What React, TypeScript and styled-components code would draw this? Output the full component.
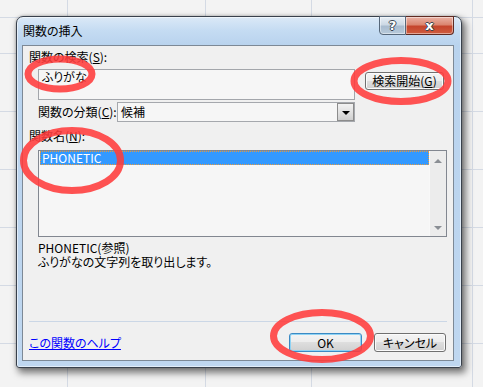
import React from "react";
import styled, { createGlobalStyle } from "styled-components";

const vLines = [67, 205, 311, 472];
const hLines = [17, 53, 111, 169, 227, 285, 343];
const lineColor = "#d4dae4";

const gridImages = [
  ...vLines.map(() => `linear-gradient(${lineColor}, ${lineColor})`),
  ...hLines.map(() => `linear-gradient(${lineColor}, ${lineColor})`),
].join(", ");
const gridSizes = [
  ...vLines.map(() => "1px 100%"),
  ...hLines.map(() => "100% 1px"),
].join(", ");
const gridPositions = [
  ...vLines.map((x) => `${x}px 0`),
  ...hLines.map((y) => `0 ${y}px`),
].join(", ");

const GlobalStyle = createGlobalStyle`
  html, body { margin: 0; padding: 0; }
  body {
    width: 483px;
    height: 387px;
    overflow: hidden;
    background: #f3f3f3;
    font-family: "Noto Sans CJK JP", "Noto Sans", sans-serif;
    font-size: 12px;
    font-feature-settings: "palt";
    color: #000;
  }
`;

const Page = styled.div`
  position: relative;
  width: 483px;
  height: 387px;
  box-sizing: border-box;
  padding: 16px 0 0 16px;
  background-color: #f3f3f3;
  background-image: ${gridImages};
  background-size: ${gridSizes};
  background-position: ${gridPositions};
  background-repeat: no-repeat;
`;

const Dialog = styled.div`
  width: 446px;
  height: 352px;
  box-sizing: border-box;
  border: 1px solid #39414c;
  border-radius: 7px 7px 3px 3px;
  background: linear-gradient(180deg, #dbe9f7 0px, #c4dbf2 14px, #b9d3ee 28px, #bfd7f0 100%);
  box-shadow: 3px 4px 7px 1px rgba(0, 0, 0, 0.5), 0 0 3px rgba(0, 0, 0, 0.25),
    inset 0 0 0 1px rgba(255, 255, 255, 0.55);
  display: flex;
  flex-direction: column;
  padding: 0 7px 6px 5px;
`;

const TitleBar = styled.div`
  height: 28px;
  flex: none;
  display: flex;
  align-items: flex-start;
`;

const TitleText = styled.div`
  margin: 7px 0 0 1px;
  font-size: 12px;
  line-height: 14px;
  color: #000;
`;

const TitleButtons = styled.div`
  margin-left: auto;
  margin-top: -1px;
  display: flex;
  height: 19px;
`;

const CaptionButton = styled.div<{ $close?: boolean }>`
  box-sizing: border-box;
  height: 19px;
  width: ${(p) => (p.$close ? "48px" : "27px")};
  display: flex;
  align-items: center;
  justify-content: center;
  border: 1px solid ${(p) => (p.$close ? "#5e2a22" : "#56677a")};
  border-left-width: ${(p) => (p.$close ? "0" : "1px")};
  border-radius: ${(p) => (p.$close ? "0 0 4px 0" : "0 0 0 4px")};
  background: ${(p) =>
    p.$close
      ? "linear-gradient(180deg, #eab2a5 0%, #db8670 45%, #c5452c 55%, #cf5d40 100%)"
      : "linear-gradient(180deg, #e8eff6 0%, #cdd9e5 45%, #a9bccf 55%, #b8cadb 100%)"};
  box-shadow: inset 0 0 0 1px rgba(255, 255, 255, 0.45);
  color: #fff;
  font-family: "DejaVu Sans", sans-serif;
  font-weight: bold;
  font-size: 13px;
  line-height: 1;
  text-shadow: 1px 0 0 #3b4450, -1px 0 0 #3b4450, 0 1px 0 #3b4450, 0 -1px 0 #3b4450;
`;

const Client = styled.div`
  flex: 1;
  box-sizing: border-box;
  border: 1px solid #7d8996;
  background: #f0f0f0;
  padding: 4px 6px 8px 6px;
  display: flex;
  flex-direction: column;
`;

const Label = styled.div`
  height: 14px;
  line-height: 14px;
  white-space: nowrap;
`;

const SearchRow = styled.div`
  margin-top: 5px;
  padding-left: 9px;
  display: flex;
  align-items: flex-start;
  gap: 10px;
`;

const SearchBox = styled.div`
  box-sizing: border-box;
  width: 317px;
  height: 31px;
  border: 1px solid #a3a6ab;
  background: #f6f6f6;
  padding: 0 3px;
  line-height: 14px;
`;

const Button = styled.div<{ $w: number; $h: number; $default?: boolean }>`
  box-sizing: border-box;
  width: ${(p) => p.$w}px;
  height: ${(p) => p.$h}px;
  border: 1px solid ${(p) => (p.$default ? "#3b8ac4" : "#707070")};
  border-radius: 3px;
  background: linear-gradient(180deg, #f4f4f4 0%, #ececec 50%, #dedede 50%, #d0d0d0 100%);
  box-shadow: inset 0 0 0 1px ${(p) => (p.$default ? "#8fd3f4" : "#fbfbfb")};
  display: flex;
  align-items: center;
  justify-content: center;
  font-size: 12px;
  line-height: 14px;
  white-space: nowrap;
  flex: none;
`;

const SearchButton = styled(Button)`
  margin-top: 3px;
`;

const CategoryRow = styled.div`
  margin-top: 2px;
  padding-left: 9px;
  display: flex;
  align-items: center;
`;

const CategoryLabel = styled(Label)`
  width: 79px;
`;

const Combo = styled.div`
  box-sizing: border-box;
  width: 238px;
  height: 20px;
  border: 1px solid #a5a8ad;
  background: #f6f6f6;
  display: flex;
  align-items: center;
`;

const ComboValue = styled.div`
  flex: 1;
  padding-left: 3px;
  line-height: 14px;
`;

const ComboArrow = styled.div`
  box-sizing: border-box;
  width: 17px;
  height: 18px;
  border: 1px solid #8c8c8c;
  background: linear-gradient(180deg, #f2f2f2 0%, #e2e2e2 50%, #cfcfcf 100%);
  display: flex;
  align-items: center;
  justify-content: center;
  &::after {
    content: "";
    border-left: 4px solid transparent;
    border-right: 4px solid transparent;
    border-top: 4px solid #000;
    margin-top: 1px;
  }
`;

const NameLabel = styled(Label)`
  margin-top: 7px;
`;

const ListBox = styled.div`
  box-sizing: border-box;
  margin-top: 7px;
  margin-left: 9px;
  width: 409px;
  height: 87px;
  border: 1px solid #828790;
  background: #f6f6f6;
  display: flex;
`;

const ListItems = styled.div`
  flex: 1;
  padding-left: 1px;
`;

const ListItem = styled.div<{ $selected?: boolean }>`
  box-sizing: border-box;
  height: 14px;
  padding-left: 1px;
  line-height: 12px;
  font-size: 12px;
  color: ${(p) => (p.$selected ? "#fff" : "#000")};
  background: ${(p) => (p.$selected ? "#3399ff" : "transparent")};
  border: 1px dotted ${(p) => (p.$selected ? "#e89a3c" : "transparent")};
`;

const ScrollBar = styled.div`
  width: 17px;
  display: flex;
  flex-direction: column;
  justify-content: space-between;
  background: #ececec;
  box-shadow: inset 1px 0 0 #f8f8f8;
`;

const ScrollArrow = styled.div<{ $down?: boolean }>`
  height: 17px;
  display: flex;
  align-items: center;
  justify-content: center;
  padding-top: ${(p) => (p.$down ? "0" : "3px")};
  box-sizing: border-box;
  &::after {
    content: "";
    border-left: 4px solid transparent;
    border-right: 4px solid transparent;
    ${(p) =>
      p.$down ? "border-top: 4px solid #8a8e94;" : "border-bottom: 4px solid #8a8e94;"}
  }
`;

const Description = styled.div`
  margin-top: 4px;
  padding-left: 9px;
  line-height: 14px;
`;

const Separator = styled.div`
  margin-top: 52px;
  height: 1px;
  background: #cbd7e6;
`;

const BottomRow = styled.div`
  margin-top: 11px;
  display: flex;
  align-items: center;
  gap: 12px;
  padding-right: 1px;
`;

const HelpLink = styled.a`
  flex: 1;
  color: #0000ff;
  text-decoration: underline;
  line-height: 14px;
  cursor: pointer;
`;

const Annotations = styled.svg`
  position: absolute;
  left: 0;
  top: 0;
  width: 483px;
  height: 387px;
  pointer-events: none;
`;

const rings = [
  { cx: 60, cy: 74, rx: 32, ry: 15 },
  { cx: 401, cy: 81, rx: 47, ry: 20.5 },
  { cx: 72, cy: 160.5, rx: 48.5, ry: 30 },
  { cx: 322, cy: 336, rx: 48.5, ry: 23.5 },
];

export default function App() {
  return (
    <>
      <GlobalStyle />
      <Page>
        <Dialog>
          <TitleBar>
            <TitleText>関数の挿入</TitleText>
            <TitleButtons>
              <CaptionButton>?</CaptionButton>
              <CaptionButton $close>x</CaptionButton>
            </TitleButtons>
          </TitleBar>
          <Client>
            <Label>
              関数の検索(<u>S</u>):
            </Label>
            <SearchRow>
              <SearchBox>ふりがな</SearchBox>
              <SearchButton $w={79} $h={18}>
                検索開始(<u>G</u>)
              </SearchButton>
            </SearchRow>
            <CategoryRow>
              <CategoryLabel>
                関数の分類(<u>C</u>):
              </CategoryLabel>
              <Combo>
                <ComboValue>候補</ComboValue>
                <ComboArrow />
              </Combo>
            </CategoryRow>
            <NameLabel>
              関数名(<u>N</u>):
            </NameLabel>
            <ListBox>
              <ListItems>
                <ListItem $selected>PHONETIC</ListItem>
              </ListItems>
              <ScrollBar>
                <ScrollArrow />
                <ScrollArrow $down />
              </ScrollBar>
            </ListBox>
            <Description>
              <div>PHONETIC(参照)</div>
              <div>ふりがなの文字列を取り出します。</div>
            </Description>
            <Separator />
            <BottomRow>
              <HelpLink>この関数のヘルプ</HelpLink>
              <Button $w={73} $h={19} $default>
                OK
              </Button>
              <Button $w={72} $h={19}>
                キャンセル
              </Button>
            </BottomRow>
          </Client>
        </Dialog>
        <Annotations viewBox="0 0 483 387">
          {rings.map((r, i) => (
            <ellipse
              key={i}
              cx={r.cx}
              cy={r.cy}
              rx={r.rx}
              ry={r.ry}
              fill="none"
              stroke="#ff3b3b"
              strokeWidth={7}
              opacity={0.88}
            />
          ))}
        </Annotations>
      </Page>
    </>
  );
}
